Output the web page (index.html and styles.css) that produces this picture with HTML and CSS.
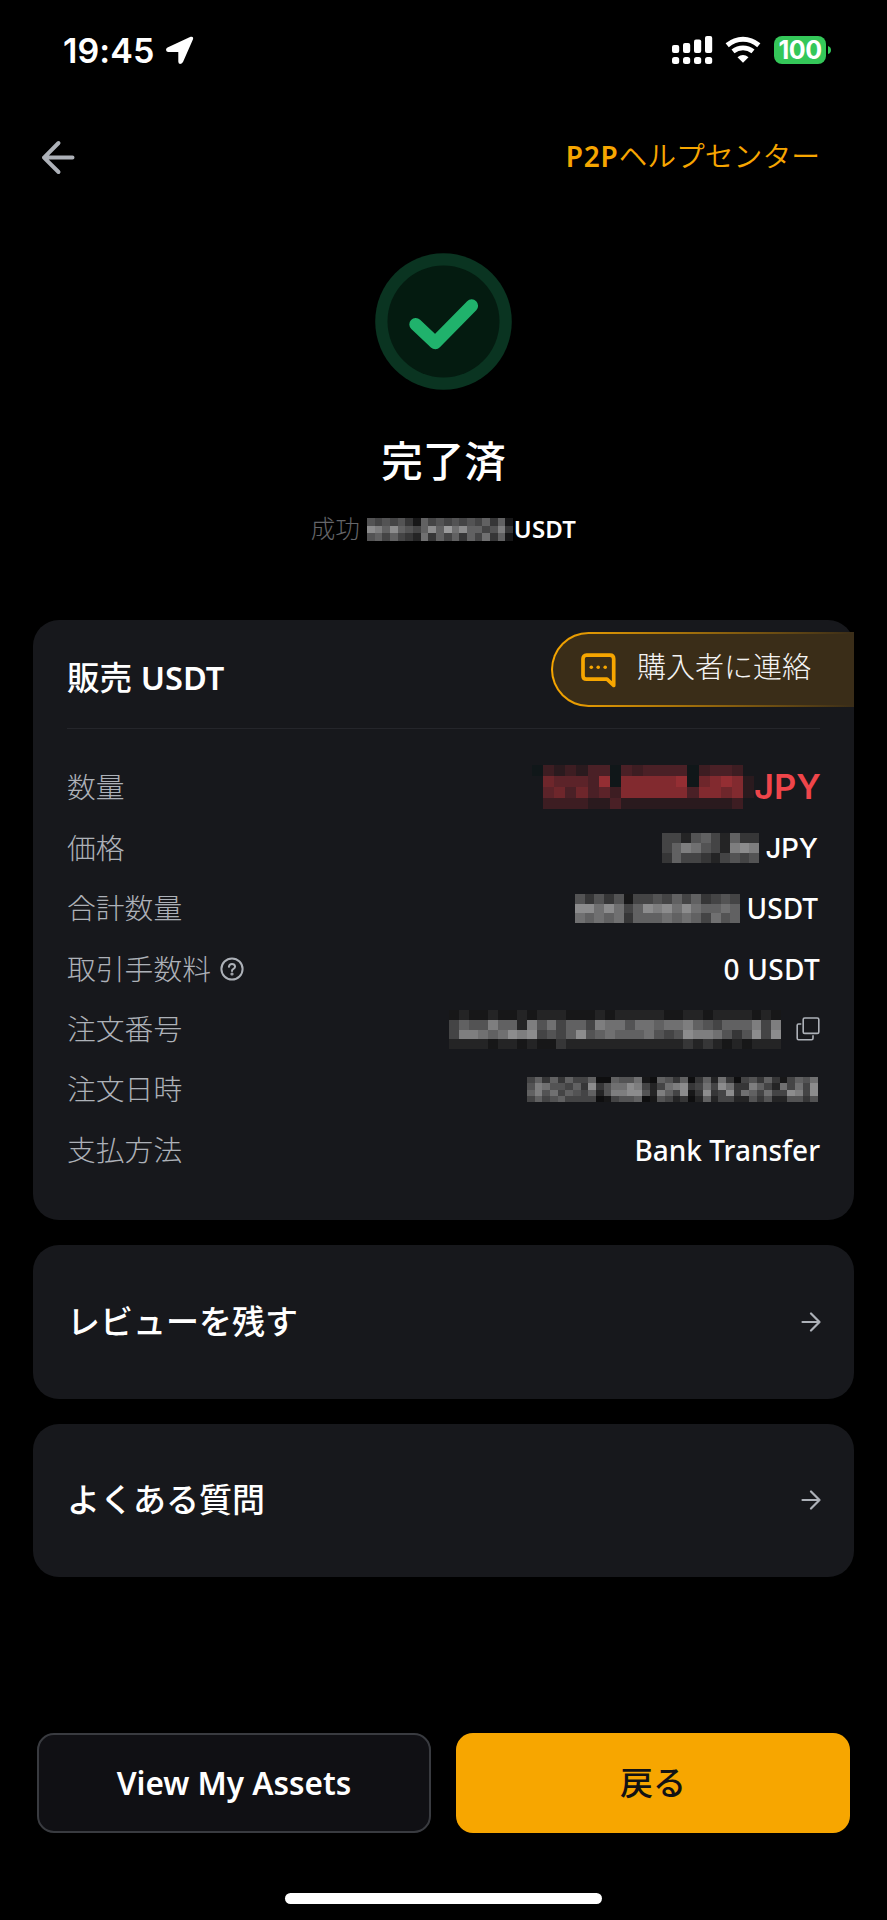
FILE: index.html
```html
<!DOCTYPE html>
<html lang="ja">
<head>
<meta charset="utf-8">
<title>P2P</title>
<link rel="stylesheet" href="styles.css">
</head>
<body>
<div class="screen">
  <header class="status">
    <div class="status-left">
      <span class="clock">19:45</span>
      <svg class="location" width="28" height="28" viewBox="0 0 28 28"><path d="M1.500 11.600 24.600.8Q27.800 0 27 3.300L17 26Q15.800 28 14 28Q12.300 27.600 12.300 25.500V16H2Q0 15.800 0 13.800Q0 12.300 1.500 11.600Z" fill="#fff"/></svg>
    </div>
    <div class="status-right">
      <svg width="41" height="28" viewBox="0 0 41 28" fill="#fff">
        <rect x="0" y="9" width="7.200" height="8" rx="2"/><rect x="11" y="7" width="7.200" height="10" rx="2"/><rect x="22" y="3.500" width="7.200" height="13.500" rx="2"/><rect x="33" y="0" width="7.200" height="17" rx="2"/>
        <rect x="0" y="21" width="7.200" height="7" rx="2.500"/><rect x="11" y="21" width="7.200" height="7" rx="2.500"/><rect x="22" y="21" width="7.200" height="7" rx="2.500"/><rect x="33" y="21" width="7.200" height="7" rx="2.500"/>
      </svg>
      <svg class="wifi" width="36" height="28" viewBox="0 0 36 28">
        <path d="M2.200 9.300Q9.500 3.300 18 3.300T33.800 9.300" fill="none" stroke="#fff" stroke-width="5"/>
        <path d="M8 15.400Q12.500 11.800 18 11.800T28 15.400" fill="none" stroke="#fff" stroke-width="4.800"/>
        <path d="M12.500 21.300Q18 16.800 23.500 21.300L18 26.700Z" fill="#fff"/>
      </svg>
      <div class="battery">100</div>
      <svg width="3" height="8" viewBox="0 0 3 8"><path d="M0 0Q3 1 3 4T0 8Z" fill="#34c759"/></svg>
    </div>
  </header>

  <nav class="nav">
    <svg width="36" height="36" viewBox="0 0 36 36" fill="none" stroke="#adb1b8" stroke-width="4" stroke-linecap="round" stroke-linejoin="round"><path d="M18.500 3 4 17.600 18.500 32M4 17.600H32.500"/></svg>
    <a class="help"><b>P2P</b>ヘルプセンター</a>
  </nav>

  <section class="result">
    <svg width="137" height="137" viewBox="0 0 137 137"><circle cx="68.500" cy="68.500" r="68.300" fill="#0a3421"/><circle cx="68.500" cy="68.500" r="56" fill="#041b10"/><path d="M40.700 71.300 60.300 89.800 96.700 52.700" fill="none" stroke="#20b26c" stroke-width="12.800" stroke-linecap="round" stroke-linejoin="round"/></svg>
    <h1>完了済</h1>
    <p class="summary"><span>成功</span><i class="mosaic m-total" data-mosaic="total"></i><b>USDT</b></p>
  </section>

  <main class="cards">
    <section class="card order">
      <div class="order-head">
        <h2>販売 <span class="h-lat">USDT</span></h2>
        <a class="contact">
          <svg width="35" height="36" viewBox="0 0 35 36"><path d="M5.500 2.200H29Q32.700 2.200 32.700 6V32.500L26 26.200H5.500Q2 26.200 2 22.500V6Q2 2.200 5.500 2.200Z" fill="none" stroke="#f7a600" stroke-width="3.700" stroke-linejoin="round"/><g fill="#f7a600"><circle cx="10.300" cy="14.300" r="1.800"/><circle cx="17.200" cy="14.300" r="1.800"/><circle cx="24.200" cy="14.300" r="1.800"/></g></svg>
          <span>購入者に連絡</span>
        </a>
      </div>
      <div class="rows">
        <div class="row first"><span>数量</span><div class="value amount"><i class="mosaic m-amount" data-mosaic="amount"></i><b>JPY</b></div></div>
        <div class="row"><span>価格</span><div class="value inset"><i class="mosaic m-price" data-mosaic="price"></i><b class="jpy">JPY</b></div></div>
        <div class="row"><span>合計数量</span><div class="value inset"><i class="mosaic m-qty" data-mosaic="qty"></i><b>USDT</b></div></div>
        <div class="row"><span>取引手数料<svg class="q" width="24" height="24" viewBox="0 0 24 24" fill="none" stroke="#adb1b8" stroke-width="2"><circle cx="12" cy="12" r="10.600"/><path d="M8.900 9.800Q9.200 6.900 12 6.900T15.100 9.500Q15.100 11 13.500 11.800T12 14" stroke-linecap="round"/><circle cx="12" cy="17" r=".6"/></svg></span><div class="value"><b class="fee">0 USDT</b></div></div>
        <div class="row"><span>注文番号</span><div class="value"><i class="mosaic m-id" data-mosaic="id"></i><svg class="copy" width="24" height="24" viewBox="0 0 24 24" fill="none" stroke="#adb1b8" stroke-width="1.600"><rect x="7.200" y="1" width="15.600" height="15.400" rx="1.500"/><path d="M5.300 7H2.500Q1.200 7 1.200 8.300V21.300Q1.200 22.700 2.500 22.700H15.500Q17 22.700 17 21.300V18.300"/></svg></div></div>
        <div class="row"><span>注文日時</span><div class="value inset"><i class="mosaic m-date" data-mosaic="date"></i></div></div>
        <div class="row"><span>支払方法</span><div class="value"><b class="bank">Bank Transfer</b></div></div>
      </div>
    </section>
    <section class="card link"><h2>レビューを残す</h2><svg width="20" height="20" viewBox="0 0 20 20" fill="none" stroke="#adb1b8" stroke-width="2.200" stroke-linecap="round" stroke-linejoin="round"><path d="M1.500 10H18.500M10 1.500 18.500 10 10 18.500"/></svg></section>
    <section class="card link"><h2>よくある質問</h2><svg width="20" height="20" viewBox="0 0 20 20" fill="none" stroke="#adb1b8" stroke-width="2.200" stroke-linecap="round" stroke-linejoin="round"><path d="M1.500 10H18.500M10 1.500 18.500 10 10 18.500"/></svg></section>
  </main>

  <footer class="actions">
    <button class="btn ghost">View My Assets</button>
    <button class="btn primary">戻る</button>
  </footer>
  <div class="home"></div>
</div>
<script src="mosaic.js"></script>
</body>
</html>
```

FILE: styles.css
```css
* { box-sizing: border-box; }
body {
  margin: 0;
  background: #000;
  color: #fff;
  font-family: "Noto Sans", "Noto Sans CJK JP", sans-serif;
}
h1, h2, p { margin: 0; }
b { font-weight: 500; }
svg { display: block; flex: none; }

.screen {
  width: 887px;
  height: 1920px;
  display: flex;
  flex-direction: column;
  overflow: hidden;
}

/* status bar */
.status {
  height: 100px;
  padding: 0 56px 0 63px;
  display: flex;
  justify-content: space-between;
  align-items: center;
}
.status-left { display: flex; align-items: center; gap: 10px; }
.clock {
  font: 600 34px/40px Inter, sans-serif;
  width: 93px;
  margin-top: 2px;
  white-space: nowrap;
  letter-spacing: 0.1px;
}
.status-right { display: flex; align-items: center; }
.wifi { margin: 0 13px 0 12px; }
.battery {
  width: 52px;
  height: 28px;
  margin-right: 2px;
  border-radius: 8px;
  background: #34c759;
  font: 700 25px/29px Inter, sans-serif;
  text-align: center;
  letter-spacing: -0.5px;
}

/* navigation */
.nav {
  height: 116px;
  padding: 0 67px 0 40px;
  display: flex;
  justify-content: space-between;
  align-items: center;
}
.help {
  display: flex;
  align-items: center;
  margin-bottom: 5px;
  color: #f7a600;
  font-size: 28.8px;
  font-weight: 350;
  line-height: 40px;
}
.help b { font-size: 28px; font-weight: 600; letter-spacing: 0.7px; }

/* result */
.result {
  height: 404px;
  padding-top: 37px;
  display: flex;
  flex-direction: column;
  align-items: center;
}
.result h1 {
  margin-top: 43px;
  font-size: 41.5px;
  line-height: 56px;
  font-weight: 500;
}
.summary {
  display: flex;
  align-items: center;
  height: 36px;
  margin-top: 22px;
  font-size: 24.5px;
  line-height: 34px;
}
.summary span { color: #65666a; font-weight: 300; margin-right: 7px; }
.summary b { margin-left: 1px; font-size: 24px; font-weight: 600; letter-spacing: 0.2px; }

/* cards */
.cards {
  padding: 0 33px;
  display: flex;
  flex-direction: column;
  gap: 25px;
}
.card { background: #17181c; border-radius: 26px; }
.card h2 { font-size: 33px; font-weight: 500; line-height: 44px; }
.order { height: 600px; padding: 0 34px; }
.order-head {
  height: 109px;
  display: flex;
  justify-content: space-between;
  align-items: flex-start;
  border-bottom: 1px solid #25262b;
}
.order-head h2 { margin-top: 36px; font-size: 32.6px; }
.h-lat { font-weight: 600; }
.contact {
  width: 303px;
  height: 75px;
  margin: 12px -34px 0 0;
  padding: 0 0 0 28px;
  display: flex;
  align-items: center;
  gap: 21px;
  border: 2px solid transparent;
  border-right: 0;
  border-radius: 38px 0 0 38px;
  background:
    linear-gradient(#3a2d18, #3a2d18) padding-box,
    linear-gradient(90deg, #f7a600, #3a2d18) border-box;
  color: #f4f4f4;
  font-size: 29px;
  font-weight: 300;
}
.contact span { line-height: 40px; margin-bottom: 5px; white-space: nowrap; }
.contact svg { margin-top: 2px; }

.rows { padding-top: 26px; }
.row {
  height: 60.3px;
  display: flex;
  justify-content: space-between;
  align-items: center;
  color: #adb1b8;
  font-size: 28.8px;
  font-weight: 300;
  line-height: 40px;
}
.row.first { height: 63px; }
.row > span { display: flex; align-items: center; }
.q { margin-left: 9px; }
.value { display: flex; align-items: center; color: #fff; }
.value b { font-size: 28px; }
.value.inset { margin-right: 2px; }
.value .jpy { font-family: Inter, sans-serif; font-size: 27.5px; }
.value .fee { letter-spacing: 0.3px; }
.amount b {
  color: #ef454a;
  font: 600 34.5px/40px Inter, sans-serif;
  width: 66px;
  white-space: nowrap;
}
.copy { margin-left: 15px; }

/* obscured values */
.mosaic { display: block; flex: none; }
.mosaic svg { width: 100%; height: 100%; }
.m-total { width: 146px; height: 23px; }
.m-amount { width: 222px; height: 44px; }
.m-price { width: 97px; height: 30px; margin-right: 6px; }
.m-qty { width: 165px; height: 29px; margin-right: 7px; }
.m-id { width: 332px; height: 39px; }
.m-date { width: 291px; height: 25px; }

.link {
  height: 153.500px;
  padding: 0 33px 0 34px;
  display: flex;
  justify-content: space-between;
  align-items: center;
}

/* footer */
.actions {
  margin-top: 156px;
  padding: 0 37px;
  display: grid;
  grid-template-columns: 1fr 1fr;
  gap: 25px;
}
.btn {
  height: 100px;
  border-radius: 17px;
  font: 500 33px/44px "Noto Sans", "Noto Sans CJK JP", sans-serif;
}
.ghost { background: #101014; border: 2px solid #393b40; color: #fff; font-weight: 600; font-size: 31.5px; }
.primary { background: #f7a600; border: 0; color: #121214; }
.home {
  width: 317px;
  height: 11px;
  margin: 59.500px auto 0;
  border-radius: 6px;
  background: #fff;
}
```

FILE: mosaic.js
```js
// Each digit is a brightness level of one mosaic cell.
const mosaics = {
  total: ["5454531645454546361", "9869654696a79664583", "5646432736463647361"],
  amount: ["03232440434444034431", "16555480777778067872", "15646453777777477672", "13333224222222222231"],
  price: ["4425642633", "4687542898", "3644324545"],
  qty: ["53535144546463454", "99797469897976676", "76767366676764756"],
  id: ["1211211212221112122222112212222121", "4655866285746648775776778654666848", "4887679894546956766675459887535949", "2222122121132222222222223232121222"],
  date: ["46363644600655710653603627304536314657", "58755463935779842478934749733864274749", "68574654625889952864913934937647449849", "46456444401455601542302624422535225535"]
};
const reds = ["#101719", "#17181c", "#2a1a1e", "#3d1d22", "#4a2026", "#5c2329", "#6e262b", "#822a2f", "#942e33"];
const grays = [14, 23, 36, 54, 68, 83, 97, 112, 126, 140, 154];

document.querySelectorAll("[data-mosaic]").forEach(el => {
  const name = el.dataset.mosaic;
  const rows = mosaics[name];
  let cells = "";
  rows.forEach((row, y) => {
    [...row].forEach((c, x) => {
      const n = parseInt(c, 16);
      const g = grays[n];
      const fill = name === "amount" ? reds[n] : `rgb(${g},${g},${g + 1})`;
      cells += `<rect x="${x}" y="${y}" width="1" height="1" fill="${fill}"/>`;
    });
  });
  el.innerHTML = `<svg viewBox="0 0 ${rows[0].length} ${rows.length}" preserveAspectRatio="none" shape-rendering="crispEdges">${cells}</svg>`;
});
```
